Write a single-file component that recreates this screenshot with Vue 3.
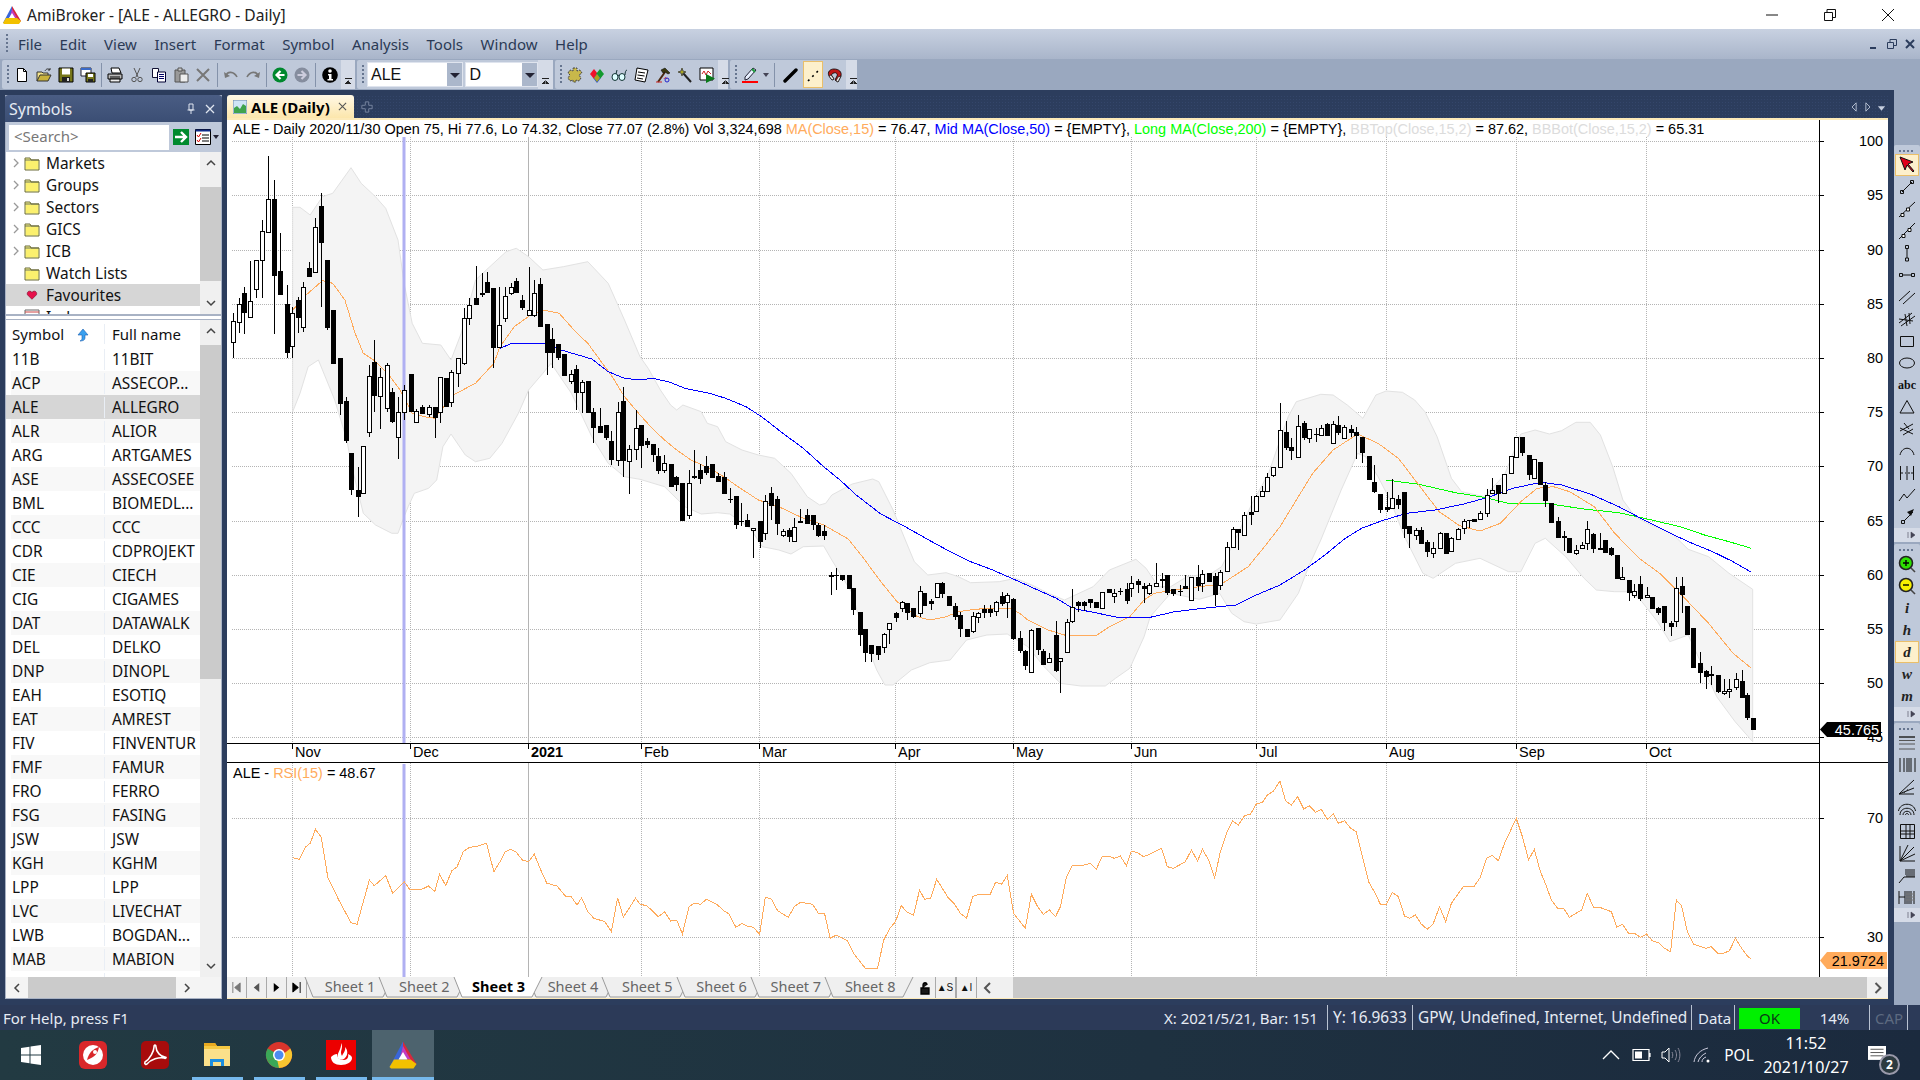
<template>
  <div class="app">
    <div class="titlebar">
      <svg class="logo" viewBox="0 0 20 20" v-html="icons.ami"></svg>
      <span class="title">AmiBroker - [ALE - ALLEGRO - Daily]</span>
      <div class="winctl">
        <svg viewBox="0 0 14 14"><path d="M1 7h12" stroke="#111" fill="none" /></svg>
        <svg viewBox="0 0 14 14"><path d="M1.5 4.5h8v8h-8zM4 4.5v-3h8.500v8h-3" stroke="#111" fill="none" /></svg>
        <svg viewBox="0 0 14 14"><path d="M1 1l12 12M13 1L1 13" stroke="#111" fill="none" /></svg>
      </div>
    </div>

    <div class="menubar">
      <i class="grip"></i>
      <span v-for="m in menus" :key="m" class="menu-item">{{ m }}</span>
      <div class="mdi-ctl">
        <svg viewBox="0 0 10 10"><path d="M1 8h6v2H1z" fill="#2c3d5d" /></svg>
        <svg viewBox="0 0 10 10"><path d="M.5 3.500h6v6h-6zM3 3V.5h6.500v6H7" stroke="#2c3d5d" fill="none" /></svg>
        <svg viewBox="0 0 10 10"><path d="M1 1l8 8M9 1L1 9" stroke="#2c3d5d" stroke-width="2" fill="none" /></svg>
      </div>
    </div>

    <div class="toolbars">
      <div class="tb tb-main">
        <i class="grip"></i>
        <template v-for="(b, i) in mainTools" :key="i">
          <i v-if="b === '|'" class="tb-sep"></i>
          <svg v-else class="tb-icon" viewBox="0 0 16 16" v-html="icons[b]"></svg>
        </template>
        <span class="overflow"></span>
      </div>
      <div class="tb tb-combo">
        <i class="grip"></i>
        <div class="combo combo-sym"><span>ALE</span><b></b></div>
        <div class="combo combo-int"><span>D</span><b></b></div>
        <span class="overflow"></span>
      </div>
      <div class="tb tb-tools">
        <i class="grip"></i>
        <svg v-for="b in analysisTools" :key="b" class="tb-icon" viewBox="0 0 16 16" v-html="icons[b]"></svg>
        <span class="overflow"></span>
      </div>
      <div class="tb tb-draw">
        <i class="grip"></i>
        <svg class="tb-icon" viewBox="0 0 16 16" v-html="icons.pen"></svg>
        <i class="mini-caret"></i>
        <i class="tb-sep"></i>
        <svg class="tb-icon" viewBox="0 0 16 16" v-html="icons.thick"></svg>
        <span class="tb-active"><svg class="tb-icon" viewBox="0 0 16 16" v-html="icons.dotted"></svg></span>
        <svg class="tb-icon" viewBox="0 0 16 16" v-html="icons.magnet"></svg>
        <span class="overflow"></span>
      </div>
    </div>

    <div class="main">
      <div class="workspace">
        <aside class="symbols">
          <div class="sym-head">
            <span>Symbols</span>
            <svg viewBox="0 0 12 12"><path d="M4 1h4v6H4zM2.500 7h7M6 7v4" stroke="#dfe5f0" fill="none" /></svg>
            <svg viewBox="0 0 12 12"><path d="M2 2l8 8M10 2l-8 8" stroke="#dfe5f0" stroke-width="1.300" fill="none" /></svg>
          </div>
          <div class="sym-search">
            <div class="search-box">&lt;Search&gt;</div>
            <svg class="go" viewBox="0 0 16 16"><rect width="16" height="16" fill="#008a2e" /><path d="M2 8h11M8 3l5 5-5 5" stroke="#fff" stroke-width="2.400" fill="none" /></svg>
            <svg class="lst" viewBox="0 0 16 16" v-html="icons.checklist"></svg>
            <i class="mini-caret dark"></i>
          </div>
          <div class="tree-wrap">
            <div class="tree">
              <div v-for="t in tree" :key="t.name" class="tree-row" :class="{ sel: t.sel }">
                <span class="chev"><svg v-if="t.exp" viewBox="0 0 8 10"><path d="M2 1l4 4-4 4" stroke="#999" stroke-width="1.300" fill="none" /></svg></span>
                <svg class="folder" viewBox="0 0 16 16" v-html="icons[t.icon]"></svg>
                <span>{{ t.name }}</span>
              </div>
            </div>
            <div class="vscroll tree-scroll">
              <svg viewBox="0 0 12 8"><path d="M2 6l4-4 4 4" stroke="#444" stroke-width="1.500" fill="none" /></svg>
              <div class="thumb-space"><div class="thumb"></div></div>
              <svg viewBox="0 0 12 8"><path d="M2 2l4 4 4-4" stroke="#444" stroke-width="1.500" fill="none" /></svg>
            </div>
          </div>
          <div class="list-wrap">
            <div class="list">
              <div class="list-head">
                <span class="col-a">Symbol
                  <svg viewBox="0 0 14 14"><path d="M7 1l5 6H9v3c0 2-2 3-5 3 2-1 2-2 2-3V7H2z" fill="#39a0ef" stroke="#1c5fb0" stroke-width=".6" /></svg>
                </span>
                <span class="col-b">Full name</span>
              </div>
              <div v-for="(r, i) in rows" :key="r[0]" class="list-row" :class="{ alt: i % 2 === 1, sel: r[0] === 'ALE' }">
                <span class="col-a">{{ r[0] }}</span>
                <span class="col-b">{{ r[1] }}</span>
              </div>
            </div>
            <div class="vscroll list-scroll">
              <svg viewBox="0 0 12 8"><path d="M2 6l4-4 4 4" stroke="#444" stroke-width="1.500" fill="none" /></svg>
              <div class="thumb-space"><div class="thumb"></div></div>
              <svg viewBox="0 0 12 8"><path d="M2 2l4 4 4-4" stroke="#444" stroke-width="1.500" fill="none" /></svg>
            </div>
          </div>
          <div class="hscroll">
            <svg viewBox="0 0 8 12"><path d="M6 2L2 6l4 4" stroke="#444" stroke-width="1.500" fill="none" /></svg>
            <div class="hthumb"></div>
            <svg viewBox="0 0 8 12"><path d="M2 2l4 4-4 4" stroke="#444" stroke-width="1.500" fill="none" /></svg>
          </div>
        </aside>

        <section class="mdi">
          <div class="mdi-tabs">
            <div class="doc-tab">
              <svg viewBox="0 0 14 14"><rect width="14" height="14" fill="#cfe4f7" stroke="#6c88aa" /><path d="M1 13V8l3-2 3 3 3-5 3 2v7z" fill="#3fa34d" /></svg>
              <b>ALE (Daily)</b>
              <svg class="x" viewBox="0 0 10 10"><path d="M1 1l8 8M9 1L1 9" stroke="#555" stroke-width="1.200" fill="none" /></svg>
            </div>
            <svg class="pin" viewBox="0 0 14 14"><path d="M5 1h4v4h4v4H9v4H5V9H1V5h4z" fill="none" stroke="#7f8ca6" /></svg>
            <div class="tab-nav">
              <svg viewBox="0 0 8 12"><path d="M6 1L1 6l5 5z" fill="none" stroke="#c6cfdf" /></svg>
              <svg viewBox="0 0 8 12"><path d="M2 1l5 5-5 5z" fill="none" stroke="#c6cfdf" /></svg>
              <svg viewBox="0 0 10 8"><path d="M1 2h8L5 7z" fill="#c6cfdf" /></svg>
            </div>
          </div>

          <svg class="chart" viewBox="227 120 1661 857">
            <rect x="227" y="120" width="1661" height="857" fill="#fff" />
            <g shape-rendering="crispEdges" stroke="#b4b4b4" stroke-dasharray="1 1">
              <path v-for="p in priceGrid" :key="p.label" :d="`M232 ${p.y}H1819`" />
              <path v-for="p in rsiGrid" :key="p.label" :d="`M232 ${p.y}H1819`" />
              <template v-for="m in months" :key="m.label">
                <path :d="`M${m.x} 137V743`" :stroke-dasharray="m.bold ? 'none' : '1 1'" />
                <path :d="`M${m.x} 763V977`" :stroke-dasharray="m.bold ? 'none' : '1 1'" />
              </template>
            </g>
            <path :d="bandPath" fill="#f4f4f4" stroke="#e2e2e2" />
            <rect x="402.500" y="137" width="3" height="606" fill="#b0b0f2" />
            <rect x="402.500" y="764" width="3" height="213" fill="#b0b0f2" />
            <polyline :points="maGreen" class="ln" stroke="#00ff00" />
            <polyline :points="maOrange" class="ln" stroke="#ffab5c" />
            <polyline :points="maBlue" class="ln" stroke="#0000ff" />
            <g shape-rendering="crispEdges">
              <template v-for="(c, i) in candles" :key="i">
                <path :d="`M${c.x} ${c.wt}V${c.wb}`" stroke="#000" />
                <rect v-if="c.hollow" :x="c.x - 2" :y="c.t" width="4" :height="c.h" fill="#fff" stroke="#000" />
                <rect v-else :x="c.x - 2.500" :y="c.t" width="5" :height="c.h" fill="#000" />
              </template>
            </g>
            <polyline :points="rsi" class="ln" stroke="#ffab5c" />

            <path d="M227 743.500H1819M227 762.500H1888M1819.500 120V977" stroke="#000" shape-rendering="crispEdges" fill="none" />
            <g shape-rendering="crispEdges" stroke="#000">
              <path v-for="m in months" :key="m.label" :d="`M${m.x} 743V749`" />
              <path v-for="p in priceGrid" :key="p.label" :d="`M1819 ${p.y}H1824`" />
              <path v-for="p in rsiGrid" :key="p.label" :d="`M1819 ${p.y}H1824`" />
            </g>

            <g class="ctext">
              <text v-for="m in months" :key="m.label" :x="m.x + 2.500" y="756.500" :font-weight="m.bold ? 700 : 400">{{ m.label }}</text>
              <text v-for="p in priceGrid" :key="p.label" x="1883" :y="p.y + 4" text-anchor="end">{{ p.label }}</text>
              <text v-for="p in rsiGrid" :key="p.label" x="1883" :y="p.y + 4" text-anchor="end">{{ p.label }}</text>

              <text x="233" y="134">ALE - Daily 2020/11/30 Open 75, Hi 77.6, Lo 74.32, Close 77.07 (2.8%) Vol 3,324,698 <tspan fill="#ffab5c">MA(Close,15)</tspan> = 76.47, <tspan fill="#0000ff">Mid MA(Close,50)</tspan> = {EMPTY}, <tspan fill="#00ff00">Long MA(Close,200)</tspan> = {EMPTY}, <tspan fill="#dcdcdc">BBTop(Close,15,2)</tspan> = 87.62, <tspan fill="#dcdcdc">BBBot(Close,15,2)</tspan> = 65.31</text>
              <text x="233" y="778">ALE - <tspan fill="#ffab5c">RSI(15)</tspan> = 48.67</text>

              <path d="M1820 729.500l7-7.500h54v15h-54z" fill="#000" />
              <text class="on-dark" x="1879" y="735" text-anchor="end">45.765</text>
              <path d="M1820 960.500l7-8.500h60v17h-60z" fill="#ffab5c" />
              <text x="1884" y="966" text-anchor="end">21.9724</text>
            </g>
          </svg>

          <div class="sheetbar">
            <div class="sheet-nav">
              <svg viewBox="0 0 12 14"><path d="M2 1v12M10 2L4 7l6 5z" stroke="#777" fill="#777" /></svg>
              <svg viewBox="0 0 12 14"><path d="M9 2L3 7l6 5z" fill="#555" /></svg>
              <svg viewBox="0 0 12 14"><path d="M3 2l6 5-6 5z" fill="#000" /></svg>
              <svg viewBox="0 0 12 14"><path d="M10 1v12M2 2l6 5-6 5z" stroke="#000" fill="#000" /></svg>
            </div>
            <div class="sheets">
              <div v-for="n in 8" :key="n" class="sheet" :class="{ on: n === 3 }">
                <svg viewBox="0 0 92 21" preserveAspectRatio="none"><path d="M1 0l8 20h70l10-20" :fill="n === 3 ? '#fff' : '#efefef'" stroke="#9a9a9a" /></svg>
                <span>Sheet {{ n }}</span>
              </div>
            </div>
            <div class="sheet-btns">
              <svg viewBox="0 0 14 14"><path d="M3 7h8v6H3zM5 7V4c0-3 4-3 4 0" stroke="#000" stroke-width="1.300" fill="#000" fill-opacity=".9" /></svg>
              <span class="sb">&#9650;S</span>
              <span class="sb">&#9650;I</span>
              <svg viewBox="0 0 12 14"><path d="M9 2L4 7l5 5" stroke="#555" stroke-width="2" fill="none" /></svg>
            </div>
            <div class="sheet-gap"></div>
            <div class="sheet-thumb"></div>
            <svg class="sheet-end" viewBox="0 0 12 14"><path d="M4 2l5 5-5 5" stroke="#555" stroke-width="2" fill="none" /></svg>
          </div>
        </section>
      </div>

      <div class="rightstrip">
        <div v-for="(g, gi) in drawGroups" :key="gi" class="rgroup">
          <i class="hgrip"></i>
          <span v-for="b in g" :key="b" class="ritem" :class="{ act: b === 'select' || b === 'perD' }">
            <span v-if="b === 'abc'" class="abc">abc</span>
            <span v-else-if="periods[b]" class="per">{{ periods[b] }}</span>
            <svg v-else viewBox="0 0 18 18" v-html="rIcons[b]"></svg>
          </span>
          <span class="rmore"><svg viewBox="0 0 10 8"><path d="M1 1v6M4 1l4 3-4 3z" fill="#445" stroke="#445" stroke-width=".6" /></svg></span>
        </div>
      </div>
    </div>

    <div class="statusbar">
      <span class="st-help">For Help, press F1</span>
      <span class="st st-x">X: 2021/5/21, Bar: 151</span>
      <span class="st st-y">Y: 16.9633</span>
      <span class="st st-g">GPW, Undefined, Internet, Undefined</span>
      <span class="st st-d">Data</span>
      <span class="st-ok">OK</span>
      <span class="st st-p">14%</span>
      <span class="st st-c">CAP</span>
    </div>

    <div class="taskbar">
      <div class="tk"><svg viewBox="0 0 22 22"><path d="M1 4l8.500-1.200V10.500H1zM10.500 2.600L21 1v9.500H10.500zM1 11.500h8.500v7.700L1 18zM10.500 11.500H21V21l-10.500-1.500z" fill="#fff" /></svg></div>
      <div class="tk"><svg viewBox="0 0 30 30" v-html="icons.rocket"></svg></div>
      <div class="tk"><svg viewBox="0 0 30 30" v-html="icons.acrobat"></svg></div>
      <div class="tk run"><svg viewBox="0 0 30 30" v-html="icons.explorer"></svg></div>
      <div class="tk run"><svg viewBox="0 0 30 30" v-html="icons.chrome"></svg></div>
      <div class="tk run"><svg viewBox="0 0 30 30" v-html="icons.santander"></svg></div>
      <div class="tk run active"><svg viewBox="0 0 20 20" v-html="icons.ami"></svg></div>
      <div class="tray">
        <svg viewBox="0 0 18 12"><path d="M1 10l8-8 8 8" stroke="#fff" stroke-width="1.300" fill="none" /></svg>
        <svg viewBox="0 0 20 14"><path d="M1 1.500h16v11H1zM18 5v4" stroke="#fff" stroke-width="1.200" fill="none" /><path d="M3 3.500h7v7H3z" fill="#fff" /></svg>
        <svg viewBox="0 0 20 18"><path d="M1 6h3l4-4v14l-4-4H1z" stroke="#fff" fill="none" /><path d="M11 6c1 2 1 4 0 6M14 4c2 3 2 7 0 10M17 2c2.500 4 2.500 10 0 14" stroke="#889" fill="none" /></svg>
        <svg viewBox="0 0 18 18"><path d="M1 16C2 9 7 4 15 2M5 16c1-4 4-7 8-9M9 16c0-2 1-4 4-5" stroke="#ccd" fill="none" /><circle cx="15" cy="15" r="1.500" fill="#fff" /></svg>
        <span class="lang">POL</span>
        <div class="clock"><span>11:52</span><span>2021/10/27</span></div>
        <div class="notif">
          <svg viewBox="0 0 22 22"><path d="M0 0h22v17H0z" fill="#fff" /><path d="M3 4h16M3 8h16M3 12h16" stroke="#333" /></svg>
          <span class="badge">2</span>
        </div>
      </div>
    </div>
  </div>
</template>

<script setup>
import { computed } from 'vue'

const menus = ['File', 'Edit', 'View', 'Insert', 'Format', 'Symbol', 'Analysis', 'Tools', 'Window', 'Help']
const mainTools = ['new', 'open', 'save', 'saveall', '|', 'print', 'cut', 'copy', 'paste', 'del', '|', 'undo', 'redo', '|', 'back', 'fwd', '|', 'info']
const analysisTools = ['gear', 'diamonds', 'glasses', 'scroll', 'hammer', 'wizard', 'chartrun']

const folderSvg = '<path d="M1 3h5l1 2h8v10H1z" fill="#ffff9c" stroke="#6b6b3a"/><path d="M2 6h12v8H2z" fill="#fbf06e"/><path d="M1 5h14" stroke="#6b6b3a"/>'

const icons = {
  ami: '<path d="M10 1L1 18h4L10 8z" fill="#3a66d8"/><path d="M10 1l9 15-3 3-6-11z" fill="#d8283c"/><path d="M10 4l5 9-7-1z" fill="#c33cc0"/><path d="M1 18l3-5h11l4 3-2 3H2z" fill="#f2c100"/><path d="M7 13h6l-3-5z" fill="#fff"/>',
  new: '<path d="M3.500 1.500h6l3 3v10h-9z" fill="#fff" stroke="#000"/><path d="M9.500 1.500v3h3" fill="none" stroke="#000"/>',
  open: '<path d="M1 14V5h5l1 1h5v2" fill="#f3e28a" stroke="#333"/><path d="M1 14l3-6h11l-3 6z" fill="#c9b23c" stroke="#333"/><path d="M9 4c1-2 3-3 5-1l-2 0M14 3V1" fill="none" stroke="#333"/>',
  save: '<path d="M1 1h14v14H1z" fill="#77771a" stroke="#000"/><path d="M4 1.500h8v6H4z" fill="#fff"/><path d="M4 10h8v5H4z" fill="#222"/><path d="M9 11h2v3H9z" fill="#ddd"/>',
  saveall: '<path d="M1 1h10v8H1z" fill="#fff" stroke="#223"/><path d="M1 1h10v2H1z" fill="#3a6ac8"/><path d="M6 6h9v9H6z" fill="#77771a" stroke="#000"/><path d="M8 7h5v3H8z" fill="#fff"/><path d="M8 12h5v3H8z" fill="#222"/>',
  print: '<path d="M4 1l8 0 2 5H5z" fill="#fff" stroke="#000"/><path d="M1 7h14v5H1z" fill="#bbb" stroke="#000"/><path d="M3 10h10M3 12h10v3H3z" fill="#eee" stroke="#000"/>',
  cut: '<path d="M5 1l4 9M11 1L7 10" stroke="#555" fill="none"/><circle cx="5" cy="12.500" r="2.200" fill="none" stroke="#555"/><circle cx="11" cy="12.500" r="2.200" fill="none" stroke="#555"/>',
  copy: '<path d="M1.500 1.500h6v9h-6z" fill="#fff" stroke="#113"/><path d="M6.500 5h8v10h-8z" fill="#fff" stroke="#003"/><path d="M8 7.500h5M8 9.500h5M8 11.500h5" stroke="#006"/>',
  paste: '<path d="M2 3h10v12H2z" fill="#999" stroke="#555"/><path d="M5 1h4v3H5z" fill="#ccc" stroke="#555"/><path d="M7 7h8v8H7z" fill="#eee" stroke="#555"/>',
  del: '<path d="M2 2l12 12M14 2L2 14" stroke="#777" stroke-width="2" fill="none"/>',
  undo: '<path d="M3 9c1-5 8-5 11 1" stroke="#777" stroke-width="1.600" fill="none"/><path d="M1 5l1 6 5-2z" fill="#777"/>',
  redo: '<path d="M13 9c-1-5-8-5-11 1" stroke="#777" stroke-width="1.600" fill="none"/><path d="M15 5l-1 6-5-2z" fill="#777"/>',
  back: '<circle cx="8" cy="8" r="7.500" fill="#00882e"/><path d="M12.500 8H5M8.500 4L4.500 8l4 4" stroke="#fff" stroke-width="2.200" fill="none"/>',
  fwd: '<circle cx="8" cy="8" r="7.500" fill="#858d9e"/><path d="M3.500 8H11M7.500 4l4 4-4 4" stroke="#ccd" stroke-width="2.200" fill="none"/>',
  info: '<circle cx="8" cy="8" r="7.800" fill="#000"/><circle cx="8" cy="4" r="1.800" fill="#fff"/><path d="M6 7h3.500v5H11v1.500H5.500V12H7V8.500H6z" fill="#fff"/>',
  gear: '<path d="M6 1h4v3l3-1 2 3-3 2 2 3-2 3-3-1v2H6v-2l-3 1-2-3 2-3-2-2 2-3 3 1z" fill="#c8b84a" stroke="#444" stroke-dasharray="2 1"/>',
  diamonds: '<path d="M5 2l4 5-4 5-4-5z" fill="#f0102a"/><path d="M11 2l4 5-4 5-4-5z" fill="#129a2e"/><path d="M8 7l3.500 4.500L8 16l-3.500-4.500z" fill="#2a4fd0"/><path d="M8 7l3 4-3 4-3-4z" fill="#a8a420"/>',
  glasses: '<ellipse cx="4" cy="10" rx="3" ry="3.500" fill="#dff" stroke="#133"/><ellipse cx="11" cy="10" rx="3" ry="3.500" fill="#dff" stroke="#133"/><path d="M7 9c.5-1 .5-1 1 0M14 8c0-3 1-5 2-5M5 7l1-4" stroke="#133" fill="none"/>',
  scroll: '<path d="M4 1l11 2-3 12-10-2z" fill="#fff" stroke="#000"/><path d="M5 5l7 1M4.500 8l7 1M4 11l6 1" stroke="#000"/>',
  hammer: '<path d="M3 15L10 5" stroke="#4a2a10" stroke-width="2"/><path d="M6 3l4-2 5 5-2 1-3-2-2 1z" fill="#3a3a10" stroke="#000" stroke-width=".5"/><path d="M1 15h6M9 12c1-2 2-2 3 0" stroke="#c22" fill="none"/><circle cx="12" cy="13" r="2" fill="none" stroke="#22c"/>',
  wizard: '<path d="M6 6l8 9" stroke="#222" stroke-width="2"/><path d="M5 1l1 3 3 1-3 1-1 3-1-3-3-1 3-1z" fill="#a8a420" stroke="#554"/>',
  chartrun: '<path d="M1 1h13v12H1z" fill="#fff" stroke="#000"/><path d="M3 7l2-3 2 4 2-4 3 3" stroke="#c22" fill="none"/><path d="M7 7l9 4.500L7 16z" fill="#0a7a1a"/>',
  pen: '<path d="M3 10L11 1l3 2-8 9-3 1z" fill="#e8f0ff" stroke="#223"/><path d="M10 2l3 3" stroke="#1a9a3a" stroke-width="2"/><path d="M0 14h16v2.500H0z" fill="#f00"/>',
  thick: '<path d="M2 14L13 3" stroke="#000" stroke-width="3.400" stroke-linecap="round"/>',
  dotted: '<path d="M2 14l12-12" stroke="#000" stroke-width="1.600" stroke-dasharray="2 4" fill="none"/>',
  magnet: '<path d="M5 13L2 9c-2-4 1-7 5-7 5 0 8 3 7 7l-3 6-3-2 2-4c1-2-1-4-3-3-2 0-3 2-2 3l2 3z" fill="#c01818" stroke="#000" stroke-width=".8"/><path d="M2 9l3 4 2-1-3-4zM14 9l-3 6-2-1 2-4z" fill="#eee" stroke="#000" stroke-width=".6"/>',
  checklist: '<path d="M.5.5h15v15H.5z" fill="#fff" stroke="#000"/><path d="M.5.500h15v2h-15z" fill="#0e2a8a"/><path d="M7 6h7M7 9h7M7 12h7" stroke="#000"/><path d="M2 6l1.500 2L6 4M2 11l1.500 2L6 9" stroke="#d00" fill="none"/>',
  folder: folderSvg,
  heart: '<g transform="translate(3 3) scale(.62)"><path d="M8 15L1 8C-1 5 2 1 5 2c1.500 0 2.500 1 3 2 .5-1 1.500-2 3-2 3-1 6 3 4 6z" fill="#e6104a" stroke="#7a0a2a"/></g>',
  grid: '<path d="M1 1h14v10H1z" fill="#fff" stroke="#666"/><path d="M1 3h14" stroke="#c44"/>',
  rocket: '<rect x="1" y="1" width="28" height="28" rx="6" fill="#d9272a"/><circle cx="15" cy="15" r="10" fill="#fff"/><path d="M9 20c2-8 6-11 12-13-1 6-4 10-12 13z" fill="#d9272a"/><circle cx="17" cy="12" r="2" fill="#fff"/>',
  acrobat: '<rect x="1" y="1" width="28" height="28" rx="5" fill="#a80c0c"/><path d="M5 22c5-3 9-11 9-15 0-3 2-2 2 0 0 5 5 10 9 10 2 0 1 2-1 1-5-1-13 1-17 6-1 1-3 0-2-2z" fill="none" stroke="#fff" stroke-width="1.600"/>',
  explorer: '<path d="M2 3h11l2 3h13v20H2z" fill="#f5c842"/><path d="M2 3h11l2 3H2z" fill="#e8a920"/><path d="M2 9h26v17H2z" fill="#fbe08a"/><path d="M8 19h14v7h-3v-4h-8v4H8z" fill="#1d8fe0"/>',
  chrome: '<circle cx="15" cy="15" r="13" fill="#d9352c"/><path d="M15 15L3.700 21.500A13 13 0 0 0 15 28z" fill="#3aa757"/><path d="M3.700 8.500A13 13 0 0 0 3.700 21.500L15 15z" fill="#3aa757"/><path d="M26.300 8.500A13 13 0 0 1 15 28l-2-9z" fill="#f8c630"/><circle cx="15" cy="15" r="6" fill="#fff"/><circle cx="15" cy="15" r="4.500" fill="#4d8bf0"/>',
  santander: '<rect width="30" height="30" fill="#ec0000"/><path d="M15 3c3 5-2 8 1 13 1-3 4-5 3-9 3 3 3 8 0 11-2 2-5 2-7 0-2-4 4-9 3-15z" fill="#fff"/><path d="M5 17c2-2 4-3 6-3 0 3 2 6 7 6 3 0 5-3 4-6 3 1 4 3 4 4 0 4-5 7-11 7S5 22 5 17z" fill="#fff"/>'
}

const tree = [
  { name: 'Markets', icon: 'folder', exp: true },
  { name: 'Groups', icon: 'folder', exp: true },
  { name: 'Sectors', icon: 'folder', exp: true },
  { name: 'GICS', icon: 'folder', exp: true },
  { name: 'ICB', icon: 'folder', exp: true },
  { name: 'Watch Lists', icon: 'folder' },
  { name: 'Favourites', icon: 'heart', sel: true },
  { name: 'Indexes', icon: 'grid' }
]

const rows = [
  ['11B', '11BIT'], ['ACP', 'ASSECOP...'], ['ALE', 'ALLEGRO'], ['ALR', 'ALIOR'], ['ARG', 'ARTGAMES'],
  ['ASE', 'ASSECOSEE'], ['BML', 'BIOMEDL...'], ['CCC', 'CCC'], ['CDR', 'CDPROJEKT'], ['CIE', 'CIECH'],
  ['CIG', 'CIGAMES'], ['DAT', 'DATAWALK'], ['DEL', 'DELKO'], ['DNP', 'DINOPL'], ['EAH', 'ESOTIQ'],
  ['EAT', 'AMREST'], ['FIV', 'FINVENTUR'], ['FMF', 'FAMUR'], ['FRO', 'FERRO'], ['FSG', 'FASING'],
  ['JSW', 'JSW'], ['KGH', 'KGHM'], ['LPP', 'LPP'], ['LVC', 'LIVECHAT'], ['LWB', 'BOGDAN...'],
  ['MAB', 'MABION'], ['MAN', 'MANGATA']
]

const drawGroups = [
  ['select', 'seg', 'ray', 'ext', 'vline', 'hline', 'chan', 'fork', 'rect', 'ell', 'abc', 'tri', 'zig', 'arc', 'cycle', 'poly', 'arrow'],
  ['zoomin', 'zoomout', 'perI', 'perH', 'perD', 'perW', 'perM'],
  ['fibr', 'fibt', 'fan', 'arcs', 'gann', 'gfan', 'fibe', 'fibx']
]
const periods = { perI: 'i', perH: 'h', perD: 'd', perW: 'w', perM: 'm' }

const s = 'fill="none" stroke="#111"'
const rIcons = {
  select: '<path d="M2 1l5 13 2-5 6 7 1-1-6-7 5-2z" fill="#e0001a" stroke="#111"/>',
  seg: `<path d="M4 14L14 4" ${s}/><path d="M2.500 12.500h3v3h-3zM12.500 2.500h3v3h-3z" ${s}/>`,
  ray: `<path d="M1 17L17 2" ${s}/><path d="M3 13.500h3v3H3zM8.500 8h3v3h-3z" fill="#fff" stroke="#111"/>`,
  ext: `<path d="M1 17L17 1" ${s}/><path d="M4 12.500h3v3H4zM10 6.500h3v3h-3z" fill="#fff" stroke="#111"/>`,
  vline: `<path d="M9 4v10M7.500 1.500h3v3h-3zM7.500 14h3v3h-3z" ${s}/>`,
  hline: `<path d="M4 9h10M1.500 7.500h3v3h-3zM13.500 7.500h3v3h-3z" ${s}/>`,
  chan: `<path d="M1 13L12 3M5 16L17 5" ${s}/>`,
  fork: `<path d="M1 13L14 3M3 16L17 6M1 9l14 2M7 4l2 12M11 3l1 11" ${s}/>`,
  rect: `<path d="M2.500 4.500h13v10h-13z" ${s}/>`,
  ell: `<ellipse cx="9" cy="9" rx="7.500" ry="5" ${s}/>`,
  tri: `<path d="M9 2.500L16 15H2z" ${s}/>`,
  zig: `<path d="M2 11l13-7M2 8l13 6M5 15l10-6M6 3l5 6" ${s}/>`,
  arc: `<path d="M2 13C4 4 14 4 16 13" ${s}/>`,
  cycle: `<path d="M2.500 2v14M9 2v14M15.500 2v14M3 9h2M7 9h1M10 9h2M13 9h2" ${s}/>`,
  poly: `<path d="M1 15l5-7 3 4 8-9" ${s}/>`,
  arrow: `<path d="M3.500 12.500h3v3h-3zM6 13l9-9" ${s}/><path d="M9 4l7-3-3 7z" fill="#111"/>`,
  zoomin: '<circle cx="8" cy="8" r="6.500" fill="#2de000" stroke="#222" stroke-width="1.600"/><path d="M5 8h6M8 5v6" stroke="#000" stroke-width="1.400"/><path d="M13 13l4 4" stroke="#444" stroke-width="1.600"/>',
  zoomout: '<circle cx="8" cy="8" r="6.500" fill="#f8f000" stroke="#222" stroke-width="1.600"/><path d="M5 8h6" stroke="#000" stroke-width="1.400"/><path d="M13 13l4 4" stroke="#444" stroke-width="1.600"/>',
  fibr: '<path d="M1 3h16M1 6.500h16M1 10h16M1 15h16" stroke="#555" fill="none"/><path d="M1 3h16" stroke="#111"/>',
  fibt: `<path d="M2 2v14M6 2v14M9 2v14M11 2v14M13 2v14M17 2v14" ${s}/>`,
  fan: `<path d="M1 16L16 2M1 16l15-6M1 16h15" ${s}/><path d="M6 15l4-4" ${s} stroke-dasharray="1 1"/>`,
  arcs: `<path d="M2 15C2 6 16 6 16 15M5 15c0-5 8-5 8 0M7.500 15c0-2 3-2 3 0M0.500 11C2 2 16 2 17.500 11" ${s}/>`,
  gann: `<path d="M2.500 2.500h14v14h-14zM2.500 9h14M2.500 12h14M8 2.500v14M12 2.500v14" ${s}/>`,
  gfan: `<path d="M2 2v15h15M2 17L16 3M2 17L10 1M2 17l15-7" ${s}/>`,
  fibe: `<path d="M1 17l5-6h11M7 4h10M7 6h10M7 8h10M8 10h9" ${s}/>`,
  fibx: `<path d="M1 3v13M7 3v13M1 9h6M9 3v13M11 3v13M13 3v13M16 3v13" ${s}/><path d="M8 6h9M8 9h9M8 12h9" stroke="#777"/>`
}

// zoomed-in reading of the price chart: [x, bodyTop, bodyBottom, wickTop, wickBottom, hollow]
const barSets = [
  { bx: 0, by: 0, bars: [
    [571, 963, 1027, 940, 1075, 1], [585, 912, 965, 895, 1000, 1], [598, 880, 940, 860, 1003, 0], [613, 902, 950, 783, 950, 1],
    [628, 781, 868, 781, 895, 1], [643, 694, 781, 660, 895, 1], [657, 598, 697, 468, 697, 1], [672, 598, 827, 540, 1003, 0],
    [686, 814, 884, 700, 884, 0], [702, 912, 1060, 855, 1075, 0], [716, 940, 1037, 920, 1075, 1], [731, 900, 955, 890, 1000, 0],
    [743, 862, 980, 845, 995, 1], [757, 804, 830, 785, 830, 0], [772, 682, 815, 655, 820, 1], [787, 618, 730, 578, 920, 0],
    [802, 780, 985, 780, 990, 0], [817, 930, 1092, 930, 1092, 0], [832, 1075, 1213, 1075, 1245, 0],
    [1136, 955, 1090, 925, 1095, 1], [1150, 915, 955, 895, 975, 1], [1165, 895, 915, 798, 915, 0], [1180, 880, 884, 820, 890, 0],
    [1194, 846, 878, 815, 878, 0], [1208, 865, 1043, 865, 1105, 0], [1223, 975, 1040, 860, 1040, 1], [1238, 888, 955, 860, 965, 1],
    [1252, 860, 880, 850, 885, 1], [1265, 842, 880, 835, 880, 0], [1280, 900, 925, 885, 930, 0], [1295, 930, 945, 800, 945, 1],
    [1309, 880, 945, 840, 950, 1], [1324, 852, 980, 835, 980, 0], [1339, 973, 1058, 973, 1125, 0], [1353, 1018, 1060, 985, 1105, 0],
    [1368, 1033, 1075, 1033, 1080, 0], [1383, 1062, 1127, 1062, 1127, 0]
  ] },
  { bx: 0, by: 360, bars: [
    [847, 123, 243, 110, 248, 0], [861, 279, 390, 279, 405, 0], [876, 390, 410, 320, 470, 0], [890, 258, 398, 258, 398, 1],
    [905, 48, 215, 15, 230, 1], [917, 5, 107, -60, 155, 0], [932, 52, 107, 25, 207, 1], [947, 15, 143, 10, 155, 1],
    [961, 95, 187, 85, 190, 0], [976, 157, 232, 110, 297, 1], [991, 90, 157, 75, 180, 1], [1006, 42, 157, 42, 157, 0],
    [1020, 152, 185, 148, 187, 1], [1035, 140, 163, 135, 163, 0], [1050, 142, 163, 135, 170, 1], [1065, 142, 175, 140, 233, 0],
    [1077, 52, 157, 52, 190, 1], [1092, 53, 140, 53, 140, 0], [1106, 37, 125, 30, 140, 1], [1121, -5, 40, -5, 80, 1],
    [1398, 42, 62, 30, 73, 1], [1412, 27, 100, 15, 150, 0], [1425, 67, 97, 60, 160, 1], [1440, 63, 158, 63, 158, 0],
    [1454, 155, 203, 143, 250, 0], [1469, 198, 218, 143, 218, 0], [1484, 195, 233, 195, 240, 0], [1498, 243, 300, 213, 315, 0],
    [1513, 157, 300, 125, 318, 1], [1527, 123, 302, 80, 350, 0], [1542, 268, 302, 255, 403, 1], [1557, 205, 268, 150, 300, 1]
  ] },
  { bx: 640, by: 360, bars: [
    [3, 195, 258, 195, 325, 0], [17, 243, 255, 235, 265, 0], [31, 252, 285, 252, 305, 0], [45, 288, 333, 265, 342, 0], [60, 310, 330, 285, 338, 1],
    [75, 312, 380, 312, 380, 0], [89, 350, 375, 348, 392, 0], [104, 370, 482, 370, 482, 0], [119, 370, 466, 330, 477, 1], [133, 348, 355, 270, 358, 0],
    [148, 330, 357, 312, 372, 0], [162, 318, 338, 288, 345, 0], [177, 312, 353, 312, 353, 0], [191, 348, 367, 338, 367, 0], [205, 350, 402, 335, 402, 0],
    [220, 418, 420, 385, 428, 0], [234, 408, 495, 408, 507, 0], [248, 484, 485, 430, 498, 0], [263, 480, 500, 462, 500, 0], [278, 505, 511, 505, 593, 1],
    [293, 484, 545, 484, 563, 0], [307, 424, 518, 405, 540, 1], [322, 400, 438, 380, 480, 0], [336, 418, 492, 408, 525, 0], [351, 514, 524, 508, 530, 1],
    [364, 511, 530, 505, 545, 0], [378, 500, 542, 473, 545, 1], [393, 484, 488, 447, 488, 0], [408, 466, 492, 447, 492, 0], [423, 466, 494, 466, 510, 0],
    [437, 495, 527, 488, 530, 0], [452, 514, 527, 495, 540, 0], [467, 645, 652, 635, 705, 0], [481, 646, 648, 625, 690, 0], [496, 646, 660, 646, 662, 0],
    [511, 646, 686, 646, 686, 0], [523, 684, 750, 684, 765, 0], [538, 757, 825, 757, 858, 0], [552, 808, 878, 808, 905, 0], [567, 855, 881, 855, 905, 0],
    [582, 858, 884, 858, 900, 0], [597, 823, 862, 820, 878, 1], [611, 790, 808, 790, 852, 1], [626, 760, 774, 755, 785, 0], [641, 727, 743, 722, 755, 1],
    [655, 730, 758, 730, 780, 0], [670, 745, 770, 745, 775, 0], [685, 694, 760, 678, 770, 1], [696, 700, 738, 700, 738, 0], [712, 723, 731, 716, 750, 0],
    [727, 670, 712, 670, 712, 1], [741, 670, 702, 665, 715, 0], [756, 708, 738, 708, 738, 0], [771, 738, 770, 730, 780, 0], [785, 765, 808, 755, 832, 0],
    [800, 808, 830, 808, 830, 0], [815, 768, 812, 755, 820, 1], [829, 760, 770, 755, 790, 1], [844, 747, 758, 735, 775, 0], [858, 747, 758, 735, 770, 0],
    [871, 727, 752, 722, 768, 1], [886, 708, 732, 695, 738, 0], [900, 706, 727, 700, 775, 1], [915, 717, 838, 715, 840, 0], [930, 835, 873, 812, 878, 0],
    [944, 873, 917, 870, 930, 0], [959, 811, 935, 808, 938, 1], [974, 805, 870, 805, 885, 0], [988, 873, 914, 868, 915, 0], [1003, 895, 907, 880, 907, 1],
    [1018, 825, 932, 783, 935, 0], [1030, 893, 904, 893, 998, 1], [1045, 787, 875, 778, 878, 1], [1059, 742, 784, 688, 788, 1], [1074, 727, 738, 722, 755, 0],
    [1089, 727, 737, 722, 752, 0], [1103, 718, 730, 718, 745, 0], [1118, 727, 745, 727, 745, 0], [1133, 697, 745, 697, 745, 1], [1148, 688, 698, 688, 698, 0],
    [1162, 700, 707, 688, 728, 1], [1177, 693, 695, 685, 705, 0], [1192, 688, 722, 670, 732, 0], [1204, 670, 683, 648, 710, 1], [1219, 663, 675, 657, 700, 0],
    [1234, 678, 686, 670, 728, 0], [1248, 676, 698, 670, 705, 1], [1263, 670, 677, 610, 677, 1], [1278, 658, 662, 640, 685, 0], [1292, 645, 698, 645, 705, 0],
    [1307, 688, 702, 688, 708, 0], [1322, 692, 694, 675, 708, 0], [1336, 678, 688, 645, 688, 0], [1351, 652, 719, 650, 722, 1], [1366, 652, 678, 615, 692, 0],
    [1378, 643, 668, 630, 695, 1], [1393, 640, 665, 640, 665, 0], [1408, 648, 705, 640, 738, 0], [1422, 637, 674, 630, 690, 1], [1437, 562, 633, 545, 637, 1],
    [1452, 508, 562, 502, 565, 1], [1466, 508, 518, 508, 570, 0], [1481, 466, 524, 455, 528, 1], [1496, 455, 465, 408, 494, 0], [1510, 408, 452, 405, 455, 1],
    [1525, 394, 409, 378, 409, 1], [1537, 352, 394, 338, 394, 1], [1552, 322, 344, 320, 350, 1], [1567, 210, 320, 130, 323, 1]
  ] },
  { bx: 1280, by: 360, bars: [
    [14, 215, 265, 183, 270, 0], [28, 262, 272, 235, 300, 0], [43, 198, 290, 165, 290, 1], [58, 188, 235, 183, 240, 0], [72, 208, 235, 208, 248, 1],
    [87, 222, 224, 205, 245, 0], [101, 203, 224, 195, 224, 1], [116, 193, 227, 188, 227, 0], [131, 193, 248, 183, 248, 1], [143, 196, 218, 168, 225, 0],
    [158, 200, 233, 195, 233, 1], [173, 208, 218, 195, 230, 0], [187, 217, 227, 200, 297, 0], [202, 230, 278, 230, 308, 0], [217, 288, 360, 288, 360, 0],
    [231, 366, 396, 315, 400, 0], [246, 402, 450, 402, 458, 0], [261, 441, 450, 395, 455, 0], [275, 415, 443, 358, 445, 1], [290, 418, 435, 405, 447, 0],
    [305, 397, 508, 397, 535, 0], [317, 498, 522, 498, 563, 0], [332, 510, 524, 503, 540, 1], [346, 510, 552, 500, 552, 0], [361, 545, 575, 540, 590, 0],
    [375, 565, 578, 545, 593, 1], [391, 520, 564, 517, 564, 1], [406, 519, 582, 519, 582, 0], [420, 535, 572, 530, 575, 1], [435, 508, 536, 505, 536, 1],
    [450, 482, 503, 478, 522, 1], [464, 480, 484, 480, 504, 0], [476, 478, 486, 478, 486, 0], [491, 460, 476, 452, 476, 1], [506, 404, 460, 388, 472, 1],
    [520, 390, 400, 355, 400, 1], [535, 376, 402, 376, 430, 0], [550, 343, 400, 343, 400, 1], [565, 287, 340, 287, 340, 1], [579, 232, 290, 232, 295, 1],
    [594, 232, 278, 232, 288, 0], [609, 285, 345, 285, 360, 0], [623, 298, 355, 298, 355, 1], [638, 307, 375, 307, 375, 0], [650, 374, 422, 365, 440, 0],
    [665, 430, 488, 430, 488, 0], [680, 483, 533, 472, 533, 0], [695, 528, 533, 512, 573, 0], [709, 534, 578, 534, 578, 0], [724, 570, 580, 555, 585, 1],
    [739, 556, 563, 545, 568, 1], [753, 508, 548, 482, 570, 1], [768, 522, 568, 518, 578, 0], [783, 565, 570, 520, 570, 0], [797, 540, 580, 540, 580, 0],
    [812, 565, 584, 562, 588, 0], [825, 586, 658, 586, 658, 0], [839, 652, 658, 622, 660, 1], [854, 660, 698, 660, 722, 0], [868, 694, 704, 672, 715, 1],
    [883, 673, 717, 648, 722, 0], [898, 706, 712, 680, 712, 1], [912, 712, 748, 712, 748, 0], [927, 744, 760, 740, 765, 0], [942, 738, 790, 738, 812, 0],
    [957, 790, 802, 782, 828, 0], [971, 685, 782, 650, 800, 1], [984, 678, 705, 650, 760, 0], [998, 738, 824, 738, 824, 0], [1013, 805, 924, 803, 924, 0],
    [1028, 910, 938, 877, 968, 0], [1043, 933, 950, 930, 988, 0], [1057, 943, 947, 918, 975, 0], [1072, 945, 996, 945, 1000, 0], [1087, 994, 1000, 958, 1005, 1],
    [1101, 988, 994, 958, 1015, 1], [1116, 958, 982, 938, 990, 1], [1131, 963, 1013, 930, 1013, 0], [1145, 1005, 1073, 1000, 1080, 0], [1158, 1075, 1110, 1075, 1110, 0]
  ] }
]

const realX = (bx, v) => bx + v / 2.45
const realY = (by, v) => by + v / 3

const candles = computed(() => barSets.flatMap(({ bx, by, bars }) =>
  bars.map(([x, t, b, wt, wb, hollow]) => {
    const top = Math.round(realY(by, t))
    const bot = Math.round(realY(by, b))
    return {
      x: Math.round(realX(bx, x)) + 0.5,
      t: hollow ? top + 0.5 : top,
      h: Math.max(bot - top, 1),
      wt: Math.round(realY(by, wt)),
      wb: Math.round(realY(by, wb)),
      hollow
    }
  })
).sort((a, b) => a.x - b.x))

// same zoom coordinates, flat x,y pairs per segment
const toPts = (segs) => segs.flatMap(([bx, by, list]) => {
  const out = []
  for (let i = 0; i < list.length; i += 2) out.push(`${realX(bx, list[i]).toFixed(1)},${realY(by, list[i + 1]).toFixed(1)}`)
  return out
})

const bandTop = [
  [0, 0, [717, 622, 735, 622, 760, 645, 790, 590, 815, 580, 860, 503, 885, 550, 920, 590, 945, 625, 975, 720, 990, 850, 1010, 970, 1035, 1030, 1080, 1035, 1105, 1080, 1130, 1000, 1165, 840, 1200, 800, 1240, 755, 1265, 745, 1295, 770, 1330, 810, 1380, 800, 1440, 785, 1490, 850, 1530, 960, 1568, 1070]],
  [640, 360, [20, 25, 50, 90, 75, 135, 90, 150, 105, 135, 150, 155, 165, 190, 190, 200, 210, 245, 250, 270, 290, 285, 330, 295, 370, 340, 410, 410, 440, 435, 455, 430, 470, 405, 520, 372, 570, 357, 585, 365, 620, 450, 650, 540, 672, 605, 705, 645, 750, 638, 780, 650, 810, 668, 880, 665, 920, 655, 960, 675, 1000, 700, 1040, 720, 1110, 680, 1150, 630, 1215, 598, 1240, 625, 1270, 680, 1300, 680, 1340, 650, 1400, 640, 1425, 620, 1450, 560, 1500, 430, 1540, 340]],
  [1280, 360, [0, 240, 20, 170, 40, 125, 100, 103, 130, 105, 165, 135, 203, 175, 235, 105, 260, 93, 300, 97, 330, 120, 355, 155, 385, 230, 420, 355, 445, 395, 500, 410, 550, 345, 590, 222, 625, 210, 660, 222, 690, 212, 725, 187, 760, 187, 785, 225, 815, 320, 840, 420, 870, 470, 900, 490, 960, 520, 1000, 568, 1050, 590, 1100, 640, 1158, 688]]
]
const bandBottom = [
  [1280, 360, [1158, 1145, 1115, 1085, 1070, 1010, 1000, 825, 955, 845, 925, 785, 880, 715, 850, 695, 820, 695, 775, 690, 745, 655, 700, 590, 650, 535, 625, 550, 590, 635, 560, 635, 490, 595, 430, 610, 375, 655, 350, 640, 305, 530, 270, 420, 240, 350, 210, 290, 190, 280, 150, 390, 100, 540, 70, 620, 45, 700, 0, 780]],
  [640, 360, [1510, 792, 1480, 785, 1450, 760, 1420, 700, 1370, 718, 1300, 700, 1250, 770, 1235, 830, 1200, 925, 1165, 955, 1140, 978, 1080, 978, 1030, 970, 990, 920, 950, 860, 900, 822, 850, 825, 800, 840, 760, 900, 710, 908, 665, 930, 620, 975, 600, 975, 580, 930, 555, 850, 520, 700, 470, 600, 450, 558, 400, 560, 370, 582, 340, 570, 300, 560, 270, 505, 220, 462, 190, 458, 150, 462, 110, 440, 60, 380, 0, 358]],
  [0, 360, [1530, 350, 1490, 310, 1450, 230, 1400, 100, 1350, 10, 1330, 40, 1295, 90, 1270, 160, 1230, 250, 1200, 295, 1165, 305, 1140, 285, 1105, 222, 1085, 260, 1070, 360, 1050, 385, 1015, 400, 1000, 440, 990, 470, 975, 520, 960, 520, 920, 495, 890, 460, 860, 310, 850, 240, 820, 120, 780, 0, 755, 20, 735, 100, 717, 155]]
]
const bandPath = computed(() => 'M' + [...toPts(bandTop), ...toPts(bandBottom)].join('L') + 'Z')

const maOrange = toPts([
  [0, 0, [717, 930, 750, 885, 790, 842, 815, 850, 845, 900, 870, 1000, 890, 1060, 915, 1080]],
  [0, 360, [950, 40, 980, 90, 1010, 160, 1040, 170, 1065, 175, 1110, 105, 1165, 70, 1210, 10]],
  [0, 0, [1225, 1040, 1260, 980, 1300, 945, 1330, 930, 1370, 940, 1410, 995, 1440, 1030, 1470, 1080]],
  [0, 360, [1500, 50, 1530, 110]],
  [640, 360, [0, 165, 30, 205, 60, 240, 90, 270, 125, 300, 170, 325, 205, 350, 240, 380, 290, 420, 340, 440, 400, 475, 450, 495, 510, 537, 545, 590, 590, 665, 630, 725, 680, 770, 710, 780, 750, 770, 780, 755, 820, 748, 860, 745, 905, 745, 930, 760, 950, 780, 1000, 810, 1040, 825, 1075, 825, 1120, 825, 1150, 800, 1200, 770, 1235, 720, 1260, 700, 1310, 690, 1370, 680, 1425, 672, 1490, 620, 1530, 560]],
  [1280, 360, [0, 500, 40, 420, 80, 340, 130, 270, 190, 222, 240, 250, 290, 295, 340, 375, 390, 455, 440, 497, 490, 513, 540, 490, 590, 425, 630, 385, 670, 380, 710, 395, 770, 440, 820, 520, 880, 595, 930, 640, 980, 700, 1050, 790, 1110, 880, 1155, 925]]
]).join(' ')

const maBlue = toPts([
  [0, 0, [1225, 1045, 1250, 1032, 1330, 1030, 1375, 1050, 1450, 1077]],
  [0, 360, [1490, 35, 1530, 55]],
  [640, 360, [0, 60, 30, 55, 70, 65, 110, 85, 170, 100, 210, 115, 260, 140, 300, 172, 350, 220, 400, 265, 450, 320, 490, 360, 530, 405, 590, 462, 650, 500, 700, 535, 760, 575, 810, 605, 860, 628, 920, 660, 960, 682, 1020, 715, 1060, 745, 1110, 757, 1170, 772, 1250, 772, 1310, 755, 1380, 745, 1460, 735, 1510, 705]],
  [1280, 360, [0, 675, 60, 630, 110, 585, 160, 535, 200, 505, 250, 482, 310, 460, 380, 450, 450, 432, 510, 412, 570, 385, 640, 367, 690, 375, 760, 402, 830, 440, 900, 485, 960, 522, 1010, 550, 1060, 575, 1110, 605, 1155, 637]]
]).join(' ')

const maGreen = toPts([
  [1280, 360, [260, 360, 340, 373, 430, 398, 500, 412, 560, 430, 650, 430, 750, 448, 830, 458, 900, 477, 980, 500, 1040, 525, 1100, 545, 1155, 565]]
]).join(' ')

const rsi = toPts([
  [0, 720, [717, 413, 733, 418, 748, 382, 760, 370, 773, 328, 787, 352, 803, 472, 830, 540, 860, 608, 875, 613, 890, 545, 905, 480, 917, 497, 945, 467, 962, 520, 990, 485, 1005, 510, 1035, 507, 1050, 498, 1065, 515, 1077, 462, 1092, 497, 1107, 452, 1120, 440, 1135, 395, 1150, 382, 1165, 380, 1192, 370, 1210, 455, 1225, 425, 1238, 395, 1252, 388, 1265, 397, 1280, 420, 1295, 425, 1309, 403, 1330, 465, 1340, 490, 1365, 498, 1385, 528, 1398, 528, 1414, 555, 1425, 533, 1440, 575, 1455, 595, 1482, 605, 1498, 635, 1513, 533, 1527, 592, 1557, 535]],
  [640, 720, [0, 553, 17, 557, 45, 590, 60, 575, 75, 603, 90, 600, 104, 642, 120, 560, 133, 550, 148, 553, 163, 538, 190, 555, 205, 572, 218, 582, 235, 622, 250, 610, 263, 618, 278, 622, 293, 643, 307, 532, 322, 537, 337, 572, 363, 592, 378, 560, 393, 547, 423, 553, 437, 580, 452, 580, 466, 655, 481, 645, 508, 662, 523, 700, 552, 745, 582, 745, 597, 660, 612, 625, 626, 605, 640, 557, 655, 577, 670, 585, 685, 510, 697, 538, 712, 535, 727, 478, 756, 535, 771, 553, 785, 580, 800, 595, 815, 530, 829, 523, 858, 523, 871, 487, 886, 493, 900, 466, 915, 580, 944, 625, 959, 523, 974, 560, 988, 583, 1003, 570, 1018, 590, 1030, 560, 1045, 470, 1059, 438, 1089, 435, 1103, 430, 1118, 448, 1133, 408, 1148, 408, 1162, 415, 1177, 408, 1192, 438, 1204, 393, 1219, 398, 1234, 410, 1248, 403, 1278, 385, 1292, 440, 1307, 445, 1336, 425, 1351, 390, 1366, 423, 1378, 388, 1393, 420, 1408, 473, 1422, 395, 1437, 340, 1452, 303, 1466, 315, 1481, 287, 1496, 282, 1510, 252, 1525, 247, 1537, 225, 1552, 213]],
  [1280, 720, [0, 183, 14, 243, 28, 255, 43, 230, 58, 267, 72, 257, 87, 277, 101, 268, 116, 298, 131, 282, 143, 310, 158, 302, 173, 325, 187, 335, 202, 410, 217, 485, 231, 515, 246, 553, 261, 553, 275, 517, 290, 530, 305, 588, 317, 595, 332, 585, 346, 612, 361, 628, 375, 612, 391, 560, 406, 605, 420, 550, 450, 498, 476, 498, 491, 472, 506, 415, 520, 406, 535, 422, 550, 370, 579, 295, 594, 350, 609, 420, 623, 388, 638, 455, 650, 490, 665, 540, 680, 565, 695, 565, 709, 592, 739, 570, 753, 520, 768, 562, 783, 562, 812, 575, 825, 622, 839, 613, 854, 640, 868, 640, 883, 652, 898, 642, 912, 662, 927, 668, 942, 685, 957, 695, 971, 540, 984, 557, 998, 635, 1013, 672, 1043, 685, 1057, 680, 1072, 700, 1087, 700, 1101, 692, 1116, 655, 1131, 685, 1145, 708, 1155, 718]]
]).join(' ')

const priceGrid = [100, 95, 90, 85, 80, 75, 70, 65, 60, 55, 50, 45].map((p, i) => ({
  label: String(p),
  y: Math.round(141.3 + i * 54.18) + 0.5
}))
const rsiGrid = [{ label: '70', y: 818.5 }, { label: '30', y: 937.5 }]
const months = [
  { label: 'Nov', x: 292.5 }, { label: 'Dec', x: 410.5 }, { label: '2021', x: 528.5, bold: true },
  { label: 'Feb', x: 641.5 }, { label: 'Mar', x: 759.5 }, { label: 'Apr', x: 895.5 }, { label: 'May', x: 1013.5 },
  { label: 'Jun', x: 1131.5 }, { label: 'Jul', x: 1256.5 }, { label: 'Aug', x: 1386.5 }, { label: 'Sep', x: 1516.5 }, { label: 'Oct', x: 1646.5 }
]
</script>

<style>
html, body { margin: 0; background: #2c3d5d; }
</style>

<style scoped>
.app {
  width: 1920px;
  height: 1080px;
  display: flex;
  flex-direction: column;
  overflow: hidden;
  font-family: "Noto Sans", sans-serif;
  color: #111;
}
.titlebar {
  height: 29px;
  background: #fff;
  display: flex;
  align-items: center;
  padding-left: 2px;
  flex: none;
}
.logo { width: 20px; height: 20px; margin-right: 5px; }
.title { font-size: 15.600px; color: #222; }
.winctl { margin-left: auto; display: flex; }
.winctl svg { width: 14px; height: 14px; margin-left: 44px; }
.winctl svg:last-child { margin-right: 25px; }

.menubar {
  height: 30px;
  flex: none;
  display: flex;
  align-items: center;
  background: linear-gradient(#c8d1e1, #a9b5ca);
  padding-left: 6px;
}
.grip {
  width: 2px;
  height: 20px;
  flex: none;
  background: repeating-linear-gradient(#66758f 0 2px, transparent 2px 4px);
}
.menu-item { font-size: 15px; margin-right: 17.600px; color: #2b3a55; }
.menu-item:first-of-type { margin-left: 10px; }
.mdi-ctl { margin-left: auto; display: flex; gap: 8px; padding-right: 5px; }
.mdi-ctl svg { width: 10px; height: 10px; }

.toolbars {
  height: 31px;
  flex: none;
  display: flex;
  gap: 2px;
  background: #9aa8bf;
  padding: 1px 0 1px 2px;
  box-sizing: border-box;
}
.tb {
  height: 29px;
  display: flex;
  align-items: center;
  background: #bfc9da;
  border-radius: 2px;
  padding-left: 5px;
  box-sizing: border-box;
}
.tb-main { width: 353px; }
.tb-combo { width: 196px; }
.tb-tools { width: 173px; }
.tb-draw { width: 127px; }
.tb .grip { margin-right: 3px; }
.tb-tools .grip { margin-right: 2px; }
.tb-main .grip { margin-right: 2px; }
.tb-icon { width: 16px; height: 16px; margin: 0 3px; flex: none; }
.tb-sep { width: 1px; height: 24px; background: #8492aa; margin: 0 2.200px; flex: none; }
.tb-draw .tb-sep { margin: 0 5px; }
.overflow {
  margin-left: auto;
  width: 15px;
  align-self: stretch;
  background: #d5dbe7;
  position: relative;
}
.overflow::after {
  content: "";
  position: absolute;
  left: 4px;
  bottom: 5px;
  width: 7px;
  height: 6px;
  border-top: 1px solid #222;
  box-sizing: border-box;
  background: linear-gradient(135deg, transparent 50%, #222 50%) left bottom / 50% 4px no-repeat, linear-gradient(225deg, transparent 50%, #222 50%) right bottom / 50% 4px no-repeat;
}
.combo {
  height: 25px;
  display: flex;
  background: #fff;
  font-size: 15px;
  align-items: center;
  border: 1px solid #dfe4ee;
  box-sizing: border-box;
}
.combo span { padding-left: 3px; flex: 1; font-family: "Liberation Sans", sans-serif; font-size: 16px; }
.combo b {
  width: 15px;
  align-self: stretch;
  background: #abb7cb;
  position: relative;
}
.combo b::after {
  content: "";
  position: absolute;
  left: 3px;
  top: 10px;
  border: 5px solid transparent;
  border-top: 5px solid #223;
  border-bottom: 0;
}
.combo-sym { width: 98px; margin-right: 2px; }
.combo-int { width: 74px; }
.mini-caret {
  flex: none;
  width: 0;
  height: 0;
  border: 3.500px solid transparent;
  border-top: 4px solid #445;
  border-bottom: 0;
  margin-left: 2px;
}
.mini-caret.dark { border-top-color: #223; }
.tb-draw .tb-icon:first-of-type { margin-left: 2px; }
.tb-active {
  display: flex;
  align-items: center;
  background: #fdf0cc;
  border: 1px solid #eabf6a;
  height: 27px;
  width: 20px;
  box-sizing: border-box;
  justify-content: center;
  margin: 0 1px;
}
.tb-active .tb-icon { margin: 0; }

.main {
  flex: 1;
  min-height: 0;
  display: flex;
  background: #9aa8bf;
}
.workspace {
  width: 1894px;
  flex: none;
  display: flex;
  background: #2c3d5d;
  padding: 5px 6px 6px 5px;
  box-sizing: border-box;
  gap: 5px;
}
.symbols {
  width: 217px;
  flex: none;
  display: flex;
  flex-direction: column;
  background: #fff;
  border: 1px solid #a8b2c4;
  border-top: 0;
  box-sizing: border-box;
}
.sym-head {
  height: 27px;
  flex: none;
  margin: 0 -1px;
  display: flex;
  align-items: center;
  background: linear-gradient(#4a5d84, #3b4e74);
  color: #e6ebf4;
  font-size: 16px;
  padding: 0 6px 0 4px;
  border-radius: 3px 3px 0 0;
  gap: 7px;
}
.sym-head span { flex: 1; }
.sym-head svg { width: 12px; height: 12px; }
.sym-search {
  height: 30px;
  flex: none;
  display: flex;
  align-items: center;
  background: #bfc9da;
  padding-left: 3px;
}
.search-box {
  width: 160px;
  height: 25px;
  background: #fff;
  color: #777;
  font-size: 15px;
  line-height: 23px;
  padding-left: 5px;
  box-sizing: border-box;
}
.go { width: 16px; height: 16px; margin-left: 4px; }
.lst { width: 16px; height: 16px; margin-left: 6px; }
.tree-wrap {
  height: 162px;
  flex: none;
  display: flex;
  border-bottom: 2px solid #a8b2c4;
  overflow: hidden;
}
.tree { width: 194px; flex: none; overflow: hidden; }
.tree-row {
  height: 22px;
  display: flex;
  align-items: center;
  font-size: 15.400px;
  color: #111;
}
.tree-row.sel { background: #d6d6d6; }
.chev { width: 18px; padding-left: 6px; box-sizing: border-box; flex: none; display: flex; }
.chev svg { width: 8px; height: 10px; }
.folder { width: 16px; height: 16px; margin-right: 6px; flex: none; }
.vscroll {
  width: 21px;
  flex: none;
  display: flex;
  flex-direction: column;
  align-items: center;
  background: #f0f0f0;
}
.vscroll > svg { width: 12px; height: 8px; flex: none; margin: 7px 0; }
.thumb-space { flex: 1; align-self: stretch; min-height: 0; }
.thumb { background: #cbcbcb; }
.tree-scroll .thumb { height: 94px; margin-top: 13px; }
.list-scroll .thumb { height: 334px; margin-top: 3px; }
.list-wrap {
  flex: 1;
  min-height: 0;
  display: flex;
  overflow: hidden;
  margin-top: 3px;
  border-top: 1px solid #a8b2c4;
}
.list { width: 194px; flex: none; overflow: hidden; }
.list-head {
  height: 27px;
  display: flex;
  align-items: center;
  font-size: 15px;
}
.list-head svg { width: 14px; height: 14px; margin-left: 8px; vertical-align: -2px; }
.list-row {
  height: 24px;
  display: flex;
  align-items: center;
  font-size: 15.400px;
  color: #111;
}
.list-row.alt { background: linear-gradient(90deg, #fff 5px, #f8f8f8 5px); }
.list-row.sel { background: #d6d6d6; }
.col-a { width: 98px; padding-left: 6px; box-sizing: border-box; white-space: nowrap; flex: none; }
.col-b { padding-left: 7px; white-space: nowrap; border-left: 1px solid #e9eef5; }
.hscroll {
  height: 21px;
  flex: none;
  display: flex;
  align-items: center;
  background: #f4f4f4;
  padding-right: 21px;
}
.hscroll svg { width: 8px; height: 12px; flex: none; margin: 0 7px; }
.hthumb { width: 148px; height: 100%; background: #cbcbcb; flex: none; }

.mdi {
  width: 1661px;
  flex: none;
  display: flex;
  flex-direction: column;
  background: #fdeab8;
}
.mdi-tabs {
  height: 25px;
  flex: none;
  display: flex;
  align-items: stretch;
  background-color: #2c3d5d;
  background-image: radial-gradient(#34466a 1px, transparent 1px);
  background-size: 3px 3px;
  border-bottom: 2px solid #fdeab8;
  box-sizing: border-box;
}
.doc-tab {
  width: 127px;
  display: flex;
  align-items: center;
  background: linear-gradient(#fff8e6, #fce6ac);
  border-radius: 3px 3px 0 0;
  padding-left: 6px;
  box-sizing: border-box;
  font-size: 15px;
}
.doc-tab svg { width: 14px; height: 14px; margin-right: 4px; flex: none; }
.doc-tab b { color: #000; font-family: "Noto Sans", sans-serif; }
.doc-tab .x { width: 9px; height: 9px; margin-left: 8px; }
.pin { width: 12px; height: 12px; align-self: center; margin-left: 7px; }
.tab-nav { margin-left: auto; display: flex; align-items: center; gap: 6px; padding-right: 2px; }
.tab-nav svg { width: 7px; height: 10px; }
.tab-nav svg:last-child { width: 9px; height: 8px; margin-top: 3px; }
.chart {
  display: block;
  width: 1661px;
  height: 857px;
  flex: none;
}
.ln { fill: none; shape-rendering: crispEdges; }
.ctext text { font-family: "Liberation Sans", sans-serif; font-size: 14.450px; fill: #000; }
.ctext text.on-dark { fill: #fff; }
.ctext tspan { font-family: "Liberation Sans", sans-serif; }
.sheetbar {
  height: 21px;
  flex: none;
  display: flex;
  align-items: stretch;
  background: #f0f0f0;
}
.sheet-nav { display: flex; width: 81px; flex: none; }
.sheet-nav svg { width: 20px; height: 21px; border-right: 1px solid #aaa; box-sizing: border-box; padding: 3px 4px; }
.sheets { display: flex; flex: none; width: 610.500px; margin-left: -4px; }
.sheet {
  width: 92px;
  margin-right: -17.700px;
  flex: none;
  height: 21px;
  position: relative;
  display: flex;
  align-items: center;
  justify-content: center;
  font-size: 14.500px;
  color: #666;
  padding-bottom: 3px;
  box-sizing: border-box;
}
.sheet svg { position: absolute; inset: 0; width: 100%; height: 100%; }
.sheet span { position: relative; }
.sheet.on { z-index: 2; color: #000; font-weight: 700; }
.sheet-btns { display: flex; align-items: center; flex: none; }
.sheet-btns svg { width: 20px; height: 14px; flex: none; }
.sb {
  width: 21px;
  text-align: center;
  font-size: 10px;
  font-family: "Liberation Sans", sans-serif;
  border-left: 1px solid #aaa;
  border-right: 1px solid #aaa;
  line-height: 21px;
  box-sizing: border-box;
}
.sheet-gap { width: 16px; flex: none; }
.sheet-thumb { flex: 1; background: #c9c9c9; }
.sheet-end { width: 21px; height: 14px; align-self: center; flex: none; }

.rightstrip {
  width: 26px;
  flex: none;
  padding-top: 55px;
  display: flex;
  flex-direction: column;
  gap: 2px;
}
.rgroup {
  display: flex;
  flex-direction: column;
  align-items: center;
  background: #bfc9da;
  border-radius: 2px;
}
.hgrip {
  height: 2px;
  width: 16px;
  margin: 5px 0 2px;
  background: repeating-linear-gradient(90deg, #66758f 0 2px, transparent 2px 4px);
  flex: none;
}
.ritem {
  width: 24px;
  height: 22px;
  display: flex;
  align-items: center;
  justify-content: center;
  flex: none;
  box-sizing: border-box;
}
.ritem svg { width: 18px; height: 18px; }
.ritem.act { background: #fdf0cc; border: 1px solid #eabf6a; }
.abc { font-family: "Liberation Serif", serif; font-weight: 700; font-size: 12px; }
.per { font-family: "Liberation Serif", serif; font-weight: 700; font-style: italic; font-size: 15px; color: #222; }
.rmore {
  align-self: stretch;
  height: 14px;
  background: #d5dbe7;
  display: flex;
  align-items: center;
  justify-content: flex-end;
  padding-right: 3px;
  flex: none;
}
.rmore svg { width: 10px; height: 8px; }

.statusbar {
  height: 25px;
  flex: none;
  display: flex;
  align-items: center;
  background: #2c3a58;
  color: #e6ebf4;
  font-size: 15px;
  white-space: nowrap;
  padding-right: 12px;
}
.st-help { padding-left: 3px; margin-right: auto; }
.st { height: 100%; display: flex; align-items: center; box-sizing: border-box; border-right: 1px solid #b9c2d2; flex: none; }
.st-x { width: 168px; padding-left: 4px; }
.st-y { width: 85px; padding-left: 5px; font-size: 15.400px; }
.st-g { width: 279px; padding-left: 5px; font-size: 15.400px; }
.st-d { width: 43px; padding-left: 6px; }
.st-ok {
  width: 61px;
  height: 21px;
  margin: 3px 0 1px 4px;
  background: #00f000;
  color: #0b3b16;
  text-align: center;
  line-height: 21px;
  flex: none;
}
.st-p { width: 70px; justify-content: center; }
.st-c { width: 38px; padding-left: 5px; color: #5d6a80; }

.taskbar {
  height: 50px;
  flex: none;
  display: flex;
  background: linear-gradient(90deg, #223a42, #1e3140 60%, #1b2a3e);
  color: #fff;
}
.tk {
  width: 62px;
  flex: none;
  display: flex;
  align-items: center;
  justify-content: center;
  box-sizing: border-box;
}
.tk svg { width: 30px; height: 30px; }
.tk:first-child svg { width: 22px; height: 22px; }
.run { background: linear-gradient(#76b9ed, #76b9ed) center bottom / 51px 3px no-repeat; }
.active { background: linear-gradient(#76b9ed, #76b9ed) center bottom / 100% 3px no-repeat, #4d636e; }
.tray {
  margin-left: auto;
  display: flex;
  align-items: center;
}
.tray > svg { flex: none; }
.tray > svg:nth-child(1) { width: 18px; height: 12px; margin-right: 12px; }
.tray > svg:nth-child(2) { width: 20px; height: 14px; margin-right: 9px; }
.tray > svg:nth-child(3) { width: 20px; height: 18px; margin-right: 12px; }
.tray > svg:nth-child(4) { width: 18px; height: 18px; }
.lang { width: 44px; text-align: center; margin-left: 6px; font-size: 15.400px; }
.clock { width: 90px; display: flex; flex-direction: column; align-items: center; font-size: 16px; line-height: 24px; }
.notif { width: 44px; position: relative; display: flex; margin-left: 4px; margin-right: 21px; justify-content: center; }
.notif svg { width: 20px; height: 18px; }
.badge {
  position: absolute;
  left: 24px;
  top: 8px;
  width: 17px;
  height: 17px;
  border-radius: 50%;
  background: #2c3a40;
  border: 2px solid #99a;
  font-size: 12px;
  font-weight: 700;
  text-align: center;
  line-height: 17px;
}
</style>
